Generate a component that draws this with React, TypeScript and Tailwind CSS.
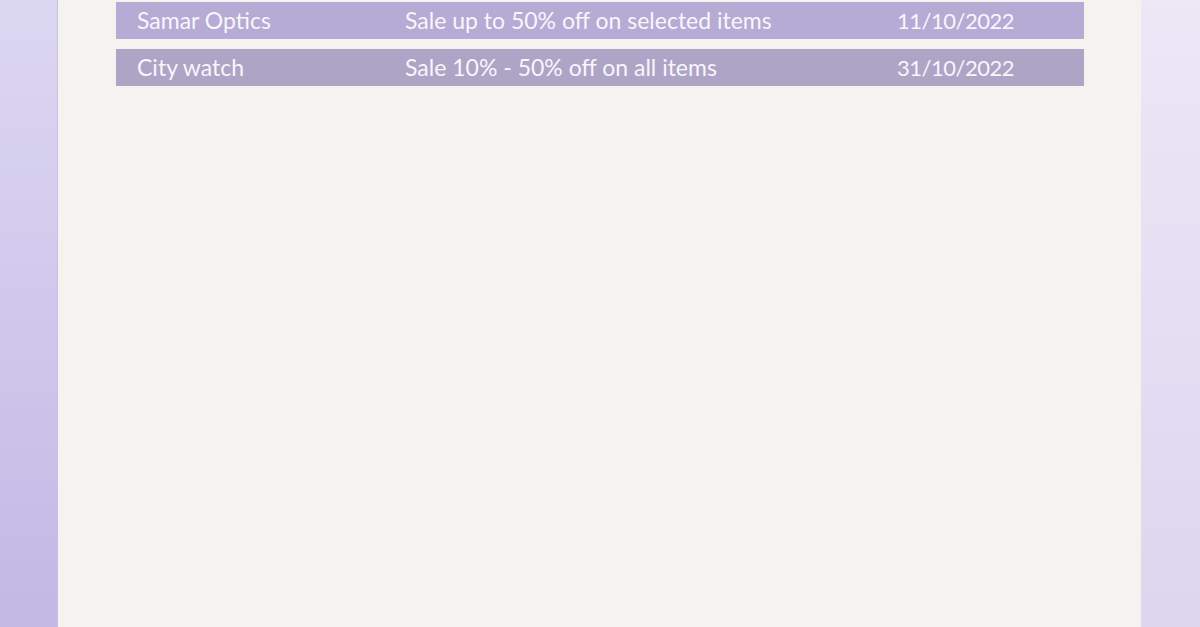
const rows = [
  { shop: 'Samar Optics', offer: 'Sale up to 50% off on selected items', date: '11/10/2022', bg: 'bg-[#b5abd4]' },
  { shop: 'City watch', offer: 'Sale 10% - 50% off on all items', date: '31/10/2022', bg: 'bg-[#ada4c6]' },
];

export default function App() {
  return (
    <div className="flex h-[627px] w-[1200px] overflow-hidden" style={{ fontFamily: 'Lato, "Open Sans", sans-serif' }}>
      {/* left strip */}
      <div className="w-[58px] shrink-0 bg-gradient-to-b from-[#dcd7f1] via-[#d0c8ec] to-[#c3b7e4] border-r border-[#c9bfee]" />

      {/* paper */}
      <div className="flex-1 bg-[#f5f3ef] pt-[2px] pl-[58px] pr-[57px]">
        <div className="flex flex-col gap-[10px]">
          {rows.map((r) => (
            <div key={r.shop} className={`flex h-[37px] items-center text-[23px] text-[#f8f6fb] ${r.bg}`}>
              <div className="w-[289px] pl-[21px]">{r.shop}</div>
              <div className="flex-1">{r.offer}</div>
              <div className="w-[230px] pr-[70px] text-right text-[22px] tracking-[-0.5px]">{r.date}</div>
            </div>
          ))}
        </div>
      </div>

      {/* right strip */}
      <div className="w-[59px] shrink-0 bg-gradient-to-b from-[#ece8f6] via-[#e4dff3] to-[#dcd6ee]" />
    </div>
  );
}
